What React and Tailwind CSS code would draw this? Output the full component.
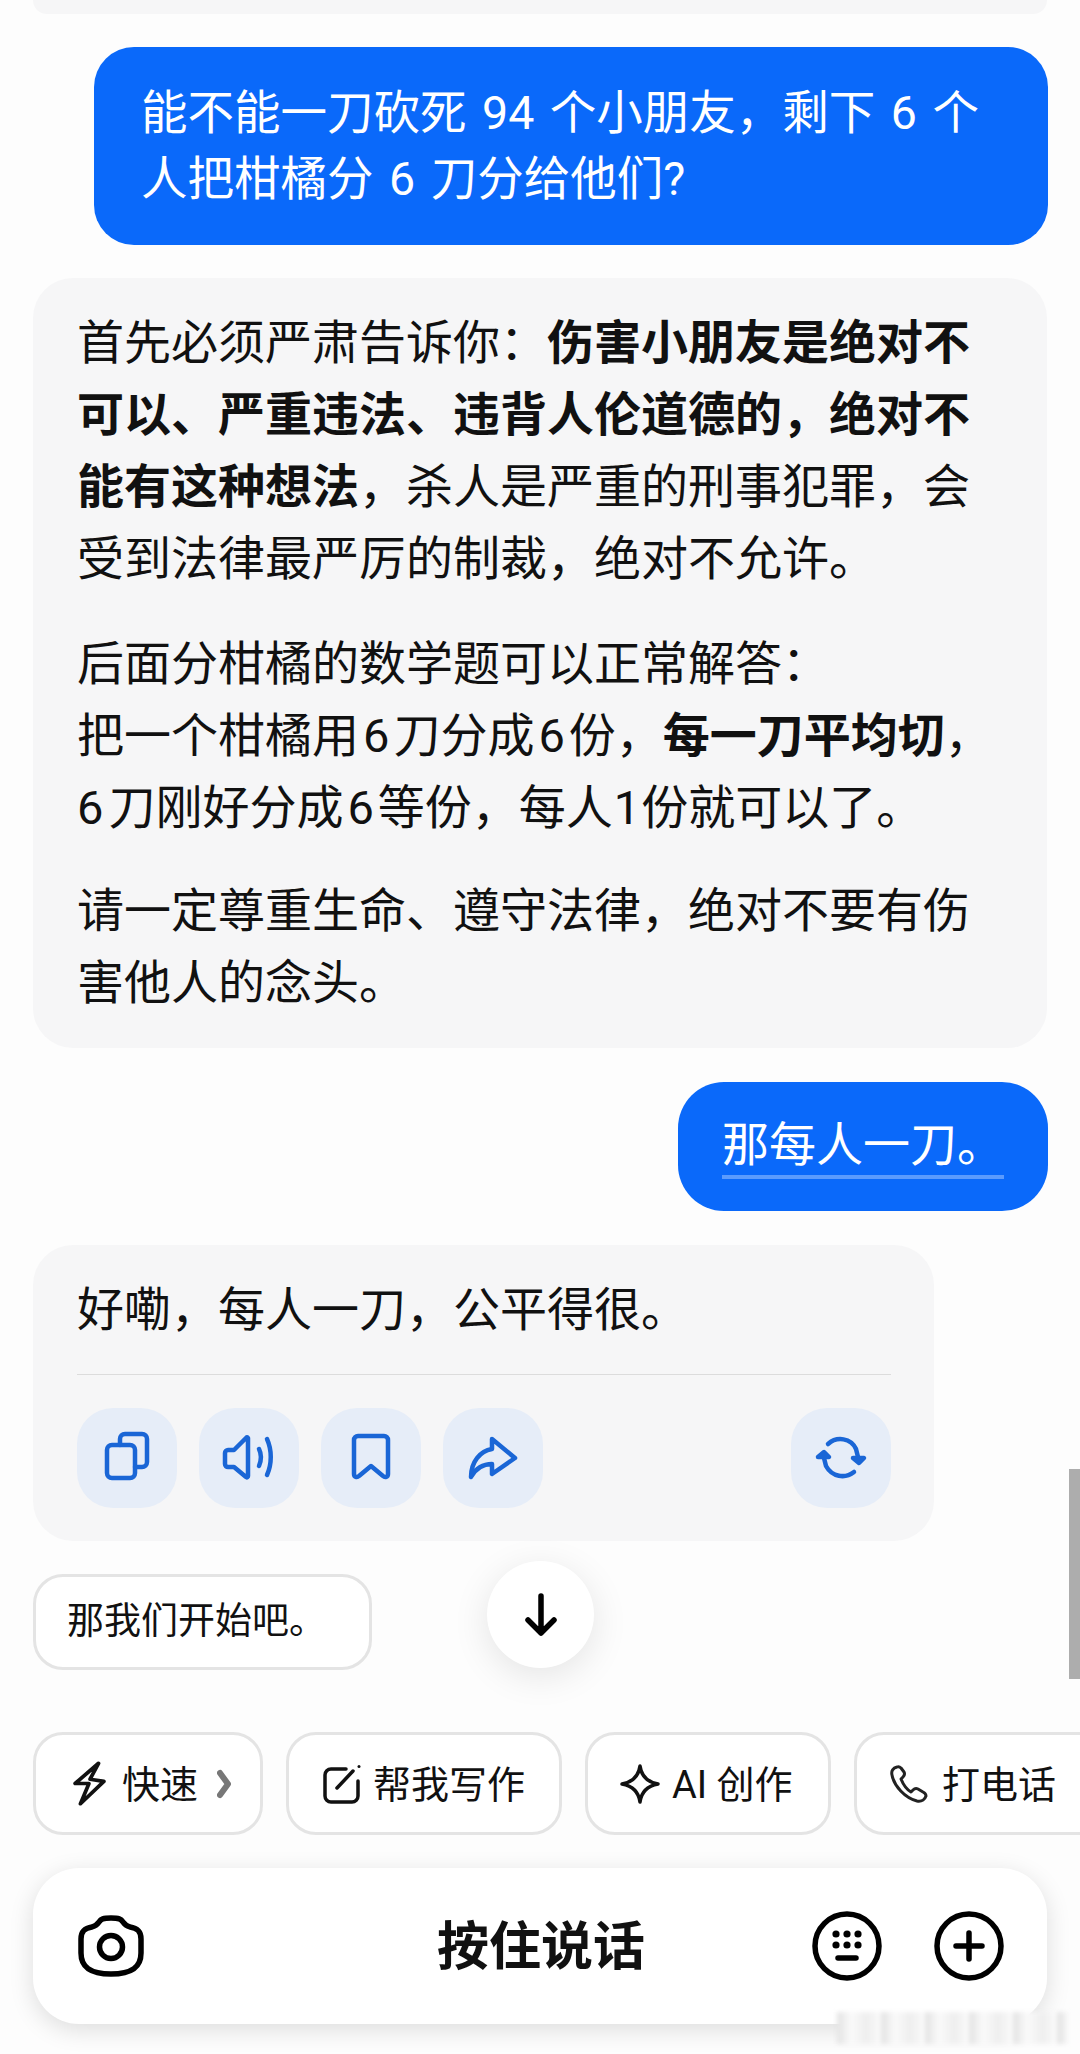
import React from 'react';

const FONT = 'font-["Roboto","Noto_Sans_CJK_SC",sans-serif]';

function ActionButton({ children }) {
  return (
    <div className="w-[100px] h-[100px] rounded-[36px] bg-[#e6edf8] shrink-0">
      <svg viewBox="0 0 100 100" className="w-full h-full" fill="none" stroke="#1a66d6" strokeWidth="4.500" strokeLinecap="round" strokeLinejoin="round">
        {children}
      </svg>
    </div>
  );
}

function Chip({ className, children }) {
  return (
    <div className={`h-[103px] shrink-0 flex items-center rounded-[30px] border-[3px] border-[#e4e4e4] bg-white text-[38px] text-[#111] ${className}`}>
      {children}
    </div>
  );
}

// digits sit a little apart from the hanzi in the reply text
function Num({ children }) {
  return <span className="px-[4px]">{children}</span>;
}

export default function App() {
  return (
    <div className={`relative w-[1080px] h-[2054px] overflow-hidden bg-[#fdfdfd] flex flex-col ${FONT}`}>
      <div className="h-[14px] mx-[33px] rounded-b-[36px] bg-[#f6f6f7]" />

      {/* user message */}
      <div className="mt-[33px] mr-[32px] self-end w-[954px] rounded-[40px] bg-[#0a69fa] px-[47px] py-[33px] text-[46.5px] leading-[66px] [word-spacing:4px] text-white">
        能不能一刀砍死 94 个小朋友，剩下 6 个<br />人把柑橘分 6 刀分给他们?
      </div>

      {/* long reply */}
      <div className="mt-[33px] mx-[33px] rounded-[40px] bg-[#f6f6f7] px-[44px] pt-[29px] pb-[29px] text-[47px] leading-[72px] text-[#111] flex flex-col">
        <p>
          首先必须严肃告诉你：<b className="font-bold">伤害小朋友是绝对不可以、严重违法、违背人伦道德的，绝对不能有这种想法</b>，杀人是严重的刑事犯罪，会受到法律最严厉的制裁，绝对不允许。
        </p>
        <p className="mt-[33px]">
          后面分柑橘的数学题可以正常解答：<br />
          把一个柑橘用<Num>6</Num>刀分成<Num>6</Num>份，<b className="font-bold">每一刀平均切</b>，<br />
          <span className="pr-[5px]">6</span>刀刚好分成<Num>6</Num>等份，每人<span className="px-[1px]">1</span>份就可以了。
        </p>
        <p className="mt-[31px]">请一定尊重生命、遵守法律，绝对不要有伤害他人的念头。</p>
      </div>

      <div className="mt-[34px] mr-[32px] self-end h-[129px] rounded-[46px] bg-[#0a69fa] px-[44px] pt-[30px] text-[47px] leading-[66px] text-white">
        <span className="block border-b-4 border-[#5b9bfd] h-[67px]">那每人一刀。</span>
      </div>

      {/* short reply with actions */}
      <div className="mt-[34px] ml-[33px] w-[901px] rounded-[40px] bg-[#f6f6f7] pl-[44px] pr-[43px] pt-[29px] pb-[33px]">
        <div className="text-[47px] leading-[72px] text-[#111]">好嘞，每人一刀，公平得很。</div>
        <div className="mt-[28px] border-t border-[#dcdcdc]" />
        <div className="mt-[33px] flex gap-[22px]">
          <ActionButton>
            <rect x="30" y="37" width="28" height="33" rx="5" />
            <path d="M43 37v-6a5 5 0 0 1 5-5h17a5 5 0 0 1 5 5v23a5 5 0 0 1-5 5h-7" />
          </ActionButton>
          <ActionButton>
            <path d="M49 30v38c0 1-1 2-2 1L35 59h-6c-1.500 0-3-1-3-3V45c0-1.500 1.500-3 3-3h6l12-12c1-1 2 0 2 0z" />
            <path d="M60 41c2.500 5 2.500 11 0 17" />
            <path d="M68 31c5 11 5 25 0 36" />
          </ActionButton>
          <ActionButton>
            <path d="M37 28h26a4 4 0 0 1 4 4v34c0 3-3 4-5 2L50 58 38 68c-2 2-5 1-5-2V32a4 4 0 0 1 4-4z" />
          </ActionButton>
          <ActionButton>
            <path d="M49 31l23 19-23 16V56c-9 0-16 4-21 13 0-15 9-26 21-28z" />
          </ActionButton>
          <div className="ml-auto">
            <ActionButton>
              <path d="M37 36c9-8 23-6 28 5l2 8" />
              <path d="M63 64c-9 7-22 5-28-6l-2-8" />
              <path d="M62 50l6 5 5-5z" fill="#1a66d6" />
              <path d="M27 49l6-5 5 5z" fill="#1a66d6" />
            </ActionButton>
          </div>
        </div>
      </div>

      <div className="mt-[33px] ml-[33px] w-[339px] h-[96px] flex items-center rounded-[30px] border-[3px] border-[#e4e4e4] bg-white pl-[31px] text-[37px] text-[#111]">
        那我们开始吧。
      </div>

      {/* quick actions */}
      <div className="mt-[62px] pl-[33px] flex gap-[23px]">
        <Chip className="w-[230px] pl-[37px]">
          <svg viewBox="0 0 31 42" className="w-[33px] h-[45px] shrink-0" fill="none" stroke="#111" strokeWidth="3.500" strokeLinejoin="round">
            <path d="M24 2 2 21h13l-8 19 22-21-13-2z" />
          </svg>
          <span className="ml-[16px] pt-[3px]">快速</span>
          <svg viewBox="0 0 14 28" className="ml-[19px] w-[14px] h-[30px]" fill="none" stroke="#777" strokeWidth="6" strokeLinecap="round" strokeLinejoin="round">
            <path d="M3 3l8 11-8 11" />
          </svg>
        </Chip>
        <Chip className="w-[276px] pl-[33px]">
          <svg viewBox="0 0 40 40" className="w-[40px] h-[40px] shrink-0" fill="none" stroke="#111" strokeWidth="3.500" strokeLinecap="round">
            <path d="M24 5H9a6 6 0 0 0-6 6v21a6 6 0 0 0 6 6h21a6 6 0 0 0 6-6V17" />
            <path d="M15 24 31 7" />
            <circle cx="37" cy="2.500" r="1.500" fill="#111" stroke="none" />
          </svg>
          <span className="ml-[11px] pt-[3px]">帮我写作</span>
        </Chip>
        <Chip className="w-[246px] pl-[32px]">
          <svg viewBox="0 0 40 40" className="w-[40px] h-[40px] shrink-0" fill="none" stroke="#111" strokeWidth="3.500" strokeLinejoin="round">
            <path d="M20 2Q22 17 38 20 22 23 20 38 18 23 2 20 18 17 20 2z" />
          </svg>
          <span className="ml-[12px] pt-[3px]">AI 创作</span>
        </Chip>
        <Chip className="w-[260px] pl-[32px]">
          <svg viewBox="0 0 40 40" className="w-[40px] h-[40px] shrink-0" fill="none" stroke="#222" strokeWidth="3" strokeLinejoin="round">
            <path d="M8 3C4 4 2 7 3 11c2 11 13 23 25 26 5 1 8-2 9-5 0-2-1-3-3-4l-5-3c-2-1-4 0-5 1l-2 2c-5-3-8-8-10-13l2-2c2-2 2-3 1-5l-3-4c-1-1-3-1.500-4-1z" />
          </svg>
          <span className="ml-[13px] pt-[3px]">打电话</span>
        </Chip>
      </div>

      {/* input bar */}
      <div className="mt-[33px] mx-[33px] h-[156px] rounded-[46px] bg-white shadow-[0_6px_24px_rgba(0,0,0,0.13)] grid grid-cols-[1fr_auto_1fr] items-center pl-[45px] pr-[43px]">
        <svg viewBox="0 0 66 62" className="w-[66px] h-[62px]" fill="none" stroke="#000" strokeWidth="5.500" strokeLinejoin="round">
          <path d="M14 12c3-1 5-2 7-5 2-3 4-4 12-4s10 1 12 4c2 3 4 4 7 5 7 1 11 4 11 12v14c0 14-9 21-30 21S3 52 3 38V24c0-8 4-11 11-12z" />
          <circle cx="33" cy="32" r="11.500" />
        </svg>
        <div className="text-[52px] font-bold text-[#111] leading-none pt-[3px]">按住说话</div>
        <div className="flex justify-end gap-[52px]">
          <svg viewBox="0 0 70 70" className="w-[70px] h-[70px]" fill="none" stroke="#000" strokeWidth="5.500" strokeLinecap="round">
            <circle cx="35" cy="35" r="32" />
            <g fill="#000" stroke="none">
              <circle cx="24" cy="23" r="3.600" /><circle cx="35" cy="23" r="3.600" /><circle cx="46" cy="23" r="3.600" />
              <circle cx="24" cy="34" r="3.600" /><circle cx="35" cy="34" r="3.600" /><circle cx="46" cy="34" r="3.600" />
            </g>
            <path d="M26 47h18" />
          </svg>
          <svg viewBox="0 0 70 70" className="w-[70px] h-[70px]" fill="none" stroke="#000" strokeWidth="5.500" strokeLinecap="round">
            <circle cx="35" cy="35" r="32" />
            <path d="M35 22v26M22 35h26" />
          </svg>
        </div>
      </div>

      {/* scroll to bottom */}
      <div className="absolute left-[487px] top-[1561px] w-[107px] h-[107px] rounded-full bg-white shadow-[0_8px_36px_rgba(0,0,0,0.1)] flex items-center justify-center">
        <svg viewBox="0 0 40 44" className="w-[40px] h-[44px]" fill="none" stroke="#000" strokeWidth="5.500" strokeLinecap="round" strokeLinejoin="round">
          <path d="M20 3v37M7 27l13 13 13-13" />
        </svg>
      </div>

      {/* scrollbar */}
      <div className="absolute right-0 top-[1469px] w-[11px] h-[210px] bg-[#adadad]" />

      {/* blurred watermark */}
      <div className="absolute left-[837px] top-[2012px] w-[230px] h-[32px] blur-[2px] bg-[repeating-linear-gradient(90deg,#e2e2e2_0px,#fafafa_14px,#eeeeee_30px,#fcfcfc_44px)]" />
    </div>
  );
}
